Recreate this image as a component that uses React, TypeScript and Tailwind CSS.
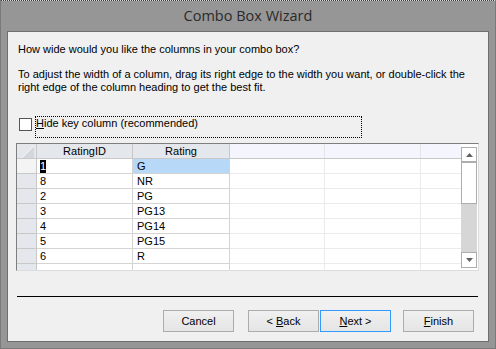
import React from "react";

const rows: [string, string][] = [
  ["1", "G"],
  ["8", "NR"],
  ["2", "PG"],
  ["3", "PG13"],
  ["4", "PG14"],
  ["5", "PG15"],
  ["6", "R"],
];

function Btn({ children, focus }: { children: React.ReactNode; focus?: boolean }) {
  return (
    <div
      className={`w-[71px] h-[22px] flex items-center justify-center border bg-gradient-to-b from-[#f0f0f0] to-[#e5e5e5] text-[11px] text-black ${
        focus ? "border-[#3399ff]" : "border-[#acacac]"
      }`}
    >
      <span className="whitespace-pre">{children}</span>
    </div>
  );
}

export default function App() {
  return (
    <div
      className="w-[496px] h-[349px] bg-[#969696] flex flex-col border-x border-b border-[#7a7a7a] overflow-hidden"
      style={{ fontFamily: '"Liberation Sans", Arial, sans-serif' }}
    >
      <div className="h-px w-full bg-[repeating-linear-gradient(90deg,#3c3c3c_0px,#3c3c3c_1px,#d8d8d8_1px,#d8d8d8_2px)]" />
      <div
        className="h-[30px] flex items-center justify-center text-[14.5px] text-[#2a2a2a]"
        style={{ fontFamily: '"Open Sans", "Noto Sans", sans-serif' }}
      >
        Combo Box Wizard
      </div>
      <div className="mx-[6px] h-[311px] border border-[#6e6e6e] bg-[#f0f0f0] flex flex-col text-[11px] leading-[13px] text-black">
        <div className="pt-[11px] pl-[10px]">
          <div>How wide would you like the columns in your combo box?</div>
          <div className="mt-[12px]">
            To adjust the width of a column, drag its right edge to the width you want, or double-click the
          </div>
          <div>right edge of the column heading to get the best fit.</div>
        </div>
        <div className="mt-[22px] pl-[11px] flex items-start">
          <div className="w-[13px] h-[13px] mt-[2px] border border-[#555] bg-white" />
          <div className="ml-[3px] w-[327px] h-[22px] border border-dotted border-black">
            <span>
              <span className="underline">H</span>ide key column (recommended)
            </span>
          </div>
        </div>
        <div className="mt-[5px] ml-[8px] w-[463px] h-[128px] border-t border-l border-[#7e7e7e] border-r border-b border-r-[#dcdcdc] border-b-[#dcdcdc] bg-white flex overflow-hidden">
          <div className="w-[444px] flex flex-col">
            <div className="h-[16px] flex border-b border-[#c8c8c8]">
              <div className="w-[20px] bg-[#e4e7eb] border-r border-[#c8c8c8] flex justify-end items-start pt-[2px] pr-[2px]">
                <svg width="12" height="12" viewBox="0 0 12 12">
                  <polygon points="12,0 12,12 0,12" fill="#d3d7dc" />
                  <line x1="0" y1="12" x2="12" y2="0" stroke="#f4f5f7" strokeWidth="1" />
                </svg>
              </div>
              <div className="w-[96px] bg-[#e4e7eb] border-r border-[#c8c8c8] flex items-center justify-center">
                RatingID
              </div>
              <div className="w-[97px] bg-[#e4e7eb] border-r border-[#c8c8c8] flex items-center justify-center">
                Rating
              </div>
              <div className="w-[95px] bg-[#f5f6fd] border-r border-[#e4e4e4]" />
              <div className="w-[96px] bg-[#f5f6fd] border-r border-[#e4e4e4]" />
              <div className="flex-1 bg-[#f5f6fd]" />
            </div>
            {rows.map(([id, r], i) => (
              <div key={id} className="h-[15px] flex shrink-0">
                <div
                  className={`w-[20px] border-r border-b border-[#c8c8c8] ${
                    i === 0 ? "bg-[#f4f4f4]" : "bg-[#e4e7eb]"
                  }`}
                />
                <div className="w-[96px] border-r border-b border-[#d4d4d4] pl-[3px] flex items-center">
                  {i === 0 ? <span className="bg-black text-white">{id}</span> : id}
                </div>
                <div
                  className={`w-[97px] border-r border-b border-[#d4d4d4] pl-[4px] flex items-center ${
                    i === 0 ? "bg-[#b7d9f7]" : ""
                  }`}
                >
                  {r}
                </div>
                <div className="w-[95px] border-r border-b border-[#ebebeb]" />
                <div className="w-[96px] border-r border-b border-[#ebebeb]" />
                <div className="flex-1 border-b border-[#ebebeb]" />
              </div>
            ))}
            <div className="h-[15px] flex shrink-0">
              <div className="w-[20px] border-r border-[#c8c8c8] bg-[#e4e7eb]" />
              <div className="w-[96px] border-r border-[#d4d4d4]" />
              <div className="w-[97px] border-r border-[#d4d4d4]" />
              <div className="w-[95px] border-r border-[#ebebeb]" />
              <div className="w-[96px] border-r border-[#ebebeb]" />
              <div className="flex-1" />
            </div>
          </div>
          <div className="w-[17px] pr-[1px] pt-[3px] flex flex-col">
            <div className="h-[15px] border border-[#adadad] bg-white flex items-center justify-center">
              <svg width="7" height="4" viewBox="0 0 7 4">
                <polygon points="3.5,0 7,4 0,4" fill="#606060" />
              </svg>
            </div>
            <div className="h-[42px] border border-[#adadad] bg-white" />
            <div className="h-[48px] bg-[#d6d6d6]" />
            <div className="h-[16px] border border-[#adadad] bg-white flex items-center justify-center">
              <svg width="7" height="4" viewBox="0 0 7 4">
                <polygon points="0,0 7,0 3.5,4" fill="#606060" />
              </svg>
            </div>
          </div>
        </div>
        <div className="mt-[25px] ml-[9px] w-[461px] h-px bg-black" />
        <div className="mt-[13px] pl-[155px] flex">
          <Btn>Cancel</Btn>
          <div className="ml-[14px]">
            <Btn>
              {"< "}
              <span className="underline">B</span>ack
            </Btn>
          </div>
          <div className="ml-[1px]">
            <Btn focus>
              <span className="underline">N</span>
              {"ext >"}
            </Btn>
          </div>
          <div className="ml-[12px]">
            <Btn>
              <span className="underline">F</span>inish
            </Btn>
          </div>
        </div>
      </div>
    </div>
  );
}
